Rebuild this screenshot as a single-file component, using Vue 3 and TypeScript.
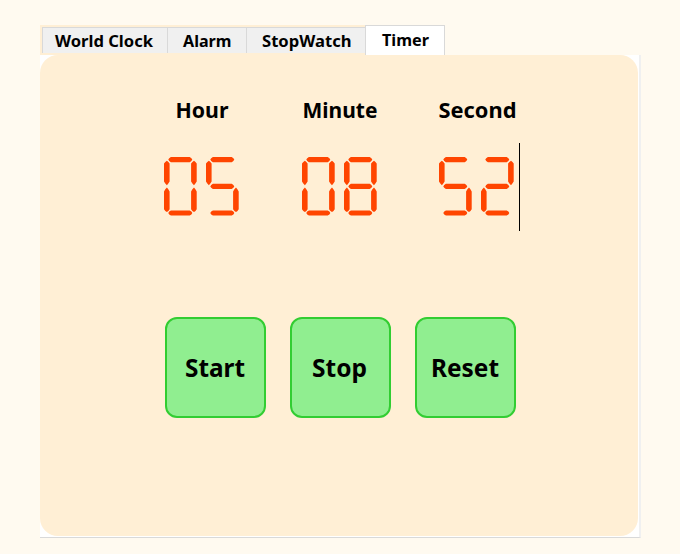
<script setup lang="ts">
import { ref } from 'vue'

interface Tab { name: string; length: number; cls: string }

const tabs: Tab[] = [
  { name: 'World Clock', length: 98, cls: 'world' },
  { name: 'Alarm', length: 48.5, cls: 'alarm' },
  { name: 'StopWatch', length: 89.5, cls: 'watch' },
  { name: 'Timer', length: 47, cls: 'timer' },
]
const active = ref('Timer')

const fields = [
  { label: 'Hour', length: 53 },
  { label: 'Minute', length: 75 },
  { label: 'Second', length: 78 },
].map((field, i) => ({ ...field, value: ['05', '08', '52'][i] }))

const actions = [
  { label: 'Start', length: 60 },
  { label: 'Stop', length: 55 },
  { label: 'Reset', length: 68 },
]

// Segments of a seven-segment digit, drawn in a 33 x 59 cell
const segments: Record<string, string> = {
  a: 'M4.3 2.6 5.2 1.2 6.9 0H25.7L27.4 1.2 28.3 2.6 27.4 4 25.7 5.2H6.9L5.2 4Z',
  b: 'M30 3.8 31.5 4.9 32.7 6.6V24.4L31.4 26.6 30 28.2 28.4 26.6 27.1 24.4V6.6L28.4 4.9Z',
  c: 'M30 30.6 31.4 32.2 32.7 34.4V52.2L31.5 53.9 30 55 28.4 53.9 27.1 52.2V34.4L28.4 32.2Z',
  d: 'M4.3 56 5.2 54.6 6.9 53.4H25.7L27.4 54.6 28.3 56 27.4 57.4 25.7 58.6H6.9L5.2 57.4Z',
  e: 'M2.9 30.6 4.3 32.2 5.6 34.4V52.2L4.4 53.9 2.9 55 1.3 53.9 0 52.2V34.4L1.3 32.2Z',
  f: 'M2.9 3.8 4.4 4.9 5.6 6.6V24.4L4.3 26.6 2.9 28.2 1.3 26.6 0 24.4V6.6L1.3 4.9Z',
  g: 'M4.3 29.4 5.2 28 6.9 26.8H25.7L27.4 28 28.3 29.4 27.4 30.8 25.7 32H6.9L5.2 30.8Z',
}

const lit: Record<string, string> = {
  '0': 'abcdef', '1': 'bc', '2': 'abged', '3': 'abgcd', '4': 'fgbc',
  '5': 'afgcd', '6': 'afgedc', '7': 'abc', '8': 'abcdefg', '9': 'abcdfg',
}

const digitPath = (digit: string): string => [...lit[digit]].map((s) => segments[s]).join('')
</script>

<template>
  <main class="window">
    <nav class="tabs">
      <button
        v-for="tab in tabs"
        :key="tab.name"
        class="tab"
        :class="[tab.cls, { active: tab.name === active }]"
      >
        <svg class="caption" :width="tab.length" height="20">
          <text x="0" y="15" font-size="16.4" :textLength="tab.length" lengthAdjust="spacingAndGlyphs">{{ tab.name }}</text>
        </svg>
      </button>
    </nav>
    <section class="page">
      <div class="panel">
        <div class="fields">
          <div v-for="(field, i) in fields" :key="field.label" class="field">
            <svg class="caption" :width="field.length" height="26">
              <text x="0.5" y="20" font-size="21.6" :textLength="field.length" lengthAdjust="spacingAndGlyphs">{{ field.label }}</text>
            </svg>
            <div class="readout">
              <svg v-for="(digit, n) in field.value" :key="n" class="digit" width="33" height="59" viewBox="0 0 33 59">
                <path :d="digitPath(digit)" />
              </svg>
              <span v-if="i === 2" class="caret"></span>
            </div>
          </div>
        </div>
        <div class="actions">
          <button v-for="action in actions" :key="action.label" class="action">
            <svg class="caption" :width="action.length" height="34">
              <text x="-1" y="26" font-size="24.4" :textLength="action.length" lengthAdjust="spacingAndGlyphs">{{ action.label }}</text>
            </svg>
          </button>
        </div>
      </div>
    </section>
  </main>
</template>

<style>
body {
  background: #fffaf0;
}
</style>

<style scoped>
.window {
  box-sizing: border-box;
  width: 680px;
  height: 554px;
  padding: 25px 39px 16px 40px;
  background: #fffaf0;
  font-family: "Noto Sans", "Open Sans", sans-serif;
  font-weight: 700;
  color: #000;
}
.tabs {
  display: flex;
  align-items: flex-start;
  box-sizing: border-box;
  width: 405px;
  height: 30px;
  padding-left: 2px;
  background: #ffefd5;
}
.tab {
  display: flex;
  box-sizing: border-box;
  height: 26px;
  margin: 2px 0 0;
  padding: 4px 0 0 12px;
  border: 0 solid #d9d9d9;
  border-width: 1px 0 0 1px;
  background: #f0f0f0;
  font: inherit;
}
.world { width: 125px; }
.alarm { width: 79px; padding-left: 15px; }
.watch { width: 119px; padding-left: 15px; }
.timer { width: 80px; padding-left: 16px; }
.tab.active {
  height: 30px;
  margin-top: 0;
  padding-top: 5px;
  border-right-width: 1px;
  background: #fff;
}
.caption {
  display: block;
  flex: none;
  overflow: visible;
  fill: #000;
}
.page {
  box-sizing: border-box;
  width: 601px;
  height: 483px;
  border-right: 2px solid #f0f0f0;
  border-bottom: 1px solid #d9d9d9;
  background: #fff;
}
.panel {
  box-sizing: border-box;
  width: 598px;
  height: 481px;
  padding-top: 43px;
  border-radius: 18px;
  background: #ffefd5;
}
.fields {
  display: flex;
  gap: 62.5px;
  padding-left: 124px;
}
.field {
  display: flex;
  flex-direction: column;
  align-items: center;
  width: 75px;
}
.readout {
  position: relative;
  display: flex;
  gap: 9px;
  margin-top: 33px;
}
.digit {
  display: block;
  fill: #ff4500;
}
.caret {
  position: absolute;
  top: -14px;
  left: 80px;
  width: 1px;
  height: 88px;
  background: #000;
}
.actions {
  display: flex;
  gap: 24px;
  margin-top: 101px;
  padding-left: 125px;
}
.action {
  display: flex;
  align-items: center;
  justify-content: center;
  box-sizing: border-box;
  width: 101px;
  height: 101px;
  padding: 0;
  border: 2px solid #32cd32;
  border-radius: 12px;
  background: #90ee90;
  font: inherit;
}
</style>
